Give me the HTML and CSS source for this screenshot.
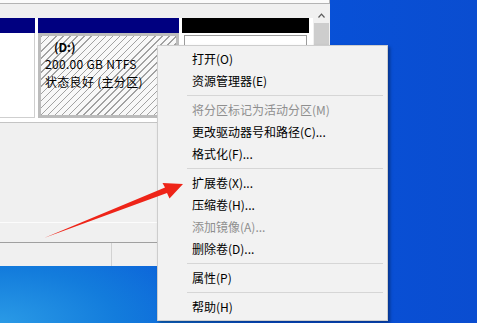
FILE: index.html
```html
<!DOCTYPE html>
<html lang="zh-CN">
<head>
    <meta charset="UTF-8">
    <title>磁盘管理 - 扩展卷</title>
    <link rel="stylesheet" href="styles.css">
</head>
<body>
    <div class="desktop">
        <div class="window">
            <div class="top-strip"></div>
            <div class="disk-pane">
                <div class="disk-view">
                    <div class="disk-gap"></div>
                    <div class="partitions">
                        <div class="part part-a">
                            <div class="bar navy"></div>
                            <div class="box plain"></div>
                        </div>
                        <div class="part part-d">
                            <div class="bar navy"></div>
                            <div class="box hatched">
                                <div class="vol-name">(D:)</div>
                                <div class="vol-line">200.00 GB NTFS</div>
                                <div class="vol-line">状态良好 (主分区)</div>
                            </div>
                        </div>
                        <div class="part part-c">
                            <div class="bar black"></div>
                            <div class="box framed"><div class="frame"></div></div>
                        </div>
                    </div>
                </div>
                <div class="vscroll">
                    <svg class="chev" width="7" height="5" viewBox="0 0 7 5">
                        <path d="M0.5 4.5 L3.5 1.2 L6.5 4.5" fill="none" stroke="#5a5a5a" stroke-width="1.2"/>
                    </svg>
                    <div class="thumb"></div>
                </div>
            </div>
            <div class="lower">
                <div class="lower-main"></div>
                <div class="lower-band"></div>
            </div>
            <div class="status">
                <div class="cell first"></div>
                <div class="cell"></div>
            </div>
        </div>

        <div class="menu">
            <div class="item">打开(O)</div>
            <div class="item">资源管理器(E)</div>
            <div class="sep"></div>
            <div class="item disabled">将分区标记为活动分区(M)</div>
            <div class="item">更改驱动器号和路径(C)...</div>
            <div class="item">格式化(F)...</div>
            <div class="sep"></div>
            <div class="item">扩展卷(X)...</div>
            <div class="item">压缩卷(H)...</div>
            <div class="item disabled">添加镜像(A)...</div>
            <div class="item">删除卷(D)...</div>
            <div class="sep"></div>
            <div class="item">属性(P)</div>
            <div class="sep"></div>
            <div class="item">帮助(H)</div>
        </div>

        <svg class="arrow" width="477" height="323" viewBox="0 0 477 323">
            <polygon points="44,238 165,187.5 162.5,183 183,184 169.5,198.5 167,193" fill="#ee2418"/>
        </svg>
    </div>
</body>
</html>
```

FILE: styles.css
```css
body {
    margin: 0;
    font-family: "Noto Sans CJK SC", "Noto Sans", sans-serif;
    font-size: 12px;
    color: #000;
}

.desktop {
    position: relative;
    width: 477px;
    height: 323px;
    overflow: hidden;
    background:
        radial-gradient(ellipse 260px 120px at 0% 100%, #2a9ae6 0%, #137cdc 45%, rgba(12, 100, 214, 0) 100%),
        linear-gradient(90deg, #0a5ed6 0%, #0752da 55%, #0a4dd0 100%);
}

/* window */

.window {
    width: 330px;
    height: 266px;
    display: flex;
    flex-direction: column;
    background: #f0f0f0;
}

.top-strip {
    height: 3px;
    width: 329px;
    background: #fbfbfb;
    border-bottom: 1px solid #b4b4b4;
    border-right: 1px solid #b4b4b4;
    box-sizing: content-box;
    flex-shrink: 0;
}

.disk-pane {
    display: flex;
    height: 118px;
    border-bottom: 1px solid #c4c4c4;
    flex-shrink: 0;
}

.disk-view {
    width: 313px;
    background: #fff;
    display: flex;
    flex-direction: column;
}

.disk-gap {
    height: 14px;
    background: #f0f0f0;
}

.partitions {
    display: flex;
    gap: 3px;
    height: 100px;
}

.part {
    display: flex;
    flex-direction: column;
}

.part-a { width: 35px; }
.part-d { width: 141px; }
.part-c { width: 127px; }

.bar {
    height: 15px;
    flex-shrink: 0;
}

.navy { background: #000080; }
.black { background: #000; }

.box {
    flex: 1;
    box-sizing: border-box;
}

.plain {
    background: #fff;
    border-right: 1px solid #cfcfcf;
    border-bottom: 1px solid #cfcfcf;
}

.hatched {
    border: 3px solid #bcbcbc;
    background: repeating-linear-gradient(-45deg, #a2a2a2 0 1px, #f8f8f8 1px 5px);
    padding: 1.5px 0 0 4px;
    line-height: 17.5px;
    font-size: 12px;
}

.vol-name {
    font-weight: bold;
    padding-left: 9px;
}

.vol-line {
    letter-spacing: 0.3px;
}

.framed {
    padding: 2px;
    background: #fff;
}

.frame {
    height: 100%;
    box-sizing: border-box;
    border: 1px solid #9c9c9c;
}

.vscroll {
    width: 17px;
    background: #f0f0f0;
    display: flex;
    flex-direction: column;
    align-items: center;
    padding-top: 9px;
    box-sizing: border-box;
}

.chev {
    display: block;
}

.thumb {
    margin-top: 5px;
    width: 15px;
    flex: 1;
    background: #cdcdcd;
}

.lower {
    display: flex;
    flex-direction: column;
    flex: 1;
}

.lower-main {
    flex: 1;
    border-bottom: 1px solid #fcfcfc;
}

.lower-band {
    height: 19px;
    border-bottom: 1px solid #a0a0a0;
}

.status {
    height: 23px;
    display: flex;
    flex-shrink: 0;
}

.cell.first {
    width: 111px;
    border-right: 1px solid #d2d2d2;
}

/* context menu */

.menu {
    position: absolute;
    left: 157px;
    top: 45px;
    width: 231px;
    box-sizing: border-box;
    background: #f2f2f2;
    border: 1px solid #cdcdcd;
    padding: 2px 0;
    box-shadow: 2px 2px 3px rgba(0, 0, 0, 0.35);
}

.item {
    height: 22px;
    line-height: 22px;
    padding-left: 34px;
    white-space: nowrap;
}

.item.disabled {
    color: #8f8f8f;
}

.sep {
    height: 1px;
    margin: 3px 4px 3px 29px;
    background: #d6d6d6;
}

.arrow {
    position: absolute;
    left: 0;
    top: 0;
    pointer-events: none;
}
```
